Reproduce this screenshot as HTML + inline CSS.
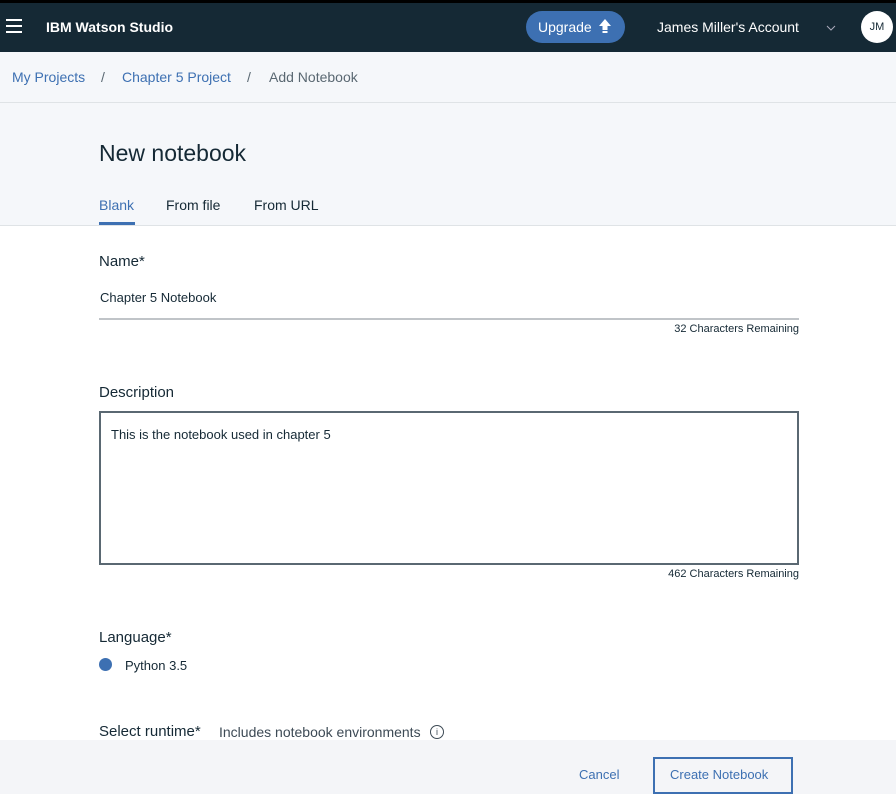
<!DOCTYPE html>
<html><head><style>
*{margin:0;padding:0;box-sizing:border-box}
body{width:896px;height:794px;overflow:hidden;font-family:"Liberation Sans",sans-serif;background:#fff;position:relative;color:#152935}
.a{position:absolute}
.top{left:0;top:0;width:896px;height:3px;background:#000}
.hdr{left:0;top:3px;width:896px;height:49px;background:#152935;color:#fff}
.bc{left:0;top:52px;width:896px;height:174px;background:#f5f7fa;border-bottom:1px solid #dfe3e6}
.bcl{top:102px;left:0;width:896px;height:1px;background:#dfe3e6}
.t{white-space:nowrap}
</style></head><body>
<div class="a top"></div>
<div class="a hdr">
 <div class="a" style="left:6px;top:16px;width:16px;height:2px;background:#fff"></div>
 <div class="a" style="left:6px;top:22px;width:16px;height:2px;background:#fff"></div>
 <div class="a" style="left:6px;top:28px;width:16px;height:2px;background:#fff"></div>
 <div class="a t" style="left:46px;top:16px;font-size:14px;font-weight:bold">IBM Watson Studio</div>
 <div class="a" style="left:526px;top:8px;width:99px;height:32px;border-radius:16px;background:#3d70b2"></div>
 <div class="a t" style="left:538px;top:16px;font-size:14px">Upgrade</div>
 <svg class="a" style="left:598px;top:15px" width="14" height="16" viewBox="0 0 14 16"><path d="M7 1 L13 8 H9.5 V12 H4.5 V8 H1 Z" fill="#fff"/><rect x="4.5" y="13" width="5" height="2" fill="#fff"/></svg>
 <div class="a t" style="left:657px;top:16px;font-size:14px">James Miller's Account</div>
 <svg class="a" style="left:826px;top:22px" width="10" height="6"><path d="M1 1 L5 5 L9 1" stroke="#aab" fill="none"/></svg>
 <div class="a" style="left:861px;top:8px;width:32px;height:32px;border-radius:50%;background:#fff;color:#152935;font-size:11px;text-align:center;line-height:32px">JM</div>
</div>
<div class="a bc"></div>
<div class="a bcl"></div>
<div class="a t" style="left:12px;top:69px;font-size:14px;color:#3d70b2">My Projects</div>
<div class="a t" style="left:101px;top:69px;font-size:14px;color:#5a6872">/</div>
<div class="a t" style="left:122px;top:69px;font-size:14px;color:#3d70b2">Chapter 5 Project</div>
<div class="a t" style="left:247px;top:69px;font-size:14px;color:#5a6872">/</div>
<div class="a t" style="left:269px;top:69px;font-size:14px;color:#5a6872">Add Notebook</div>
<div class="a t" style="left:99px;top:140px;font-size:23px;color:#152935">New notebook</div>
<div class="a t" style="left:99px;top:197px;font-size:14px;color:#3d70b2">Blank</div>
<div class="a" style="left:99px;top:222px;width:36px;height:3px;background:#3d70b2"></div>
<div class="a t" style="left:166px;top:197px;font-size:14px">From file</div>
<div class="a t" style="left:254px;top:197px;font-size:14px">From URL</div>
<div class="a t" style="left:99px;top:253px;font-size:15px">Name*</div>
<div class="a t" style="left:100px;top:290px;font-size:13px">Chapter 5 Notebook</div>
<div class="a" style="left:99px;top:318px;width:700px;height:2px;background:#c0c4c8"></div>
<div class="a t" style="right:97px;top:323px;font-size:11px">32 Characters Remaining</div>
<div class="a t" style="left:99px;top:384px;font-size:15px">Description</div>
<div class="a" style="left:99px;top:411px;width:700px;height:154px;border:2px solid #5a6872"></div>
<div class="a t" style="left:111px;top:427px;font-size:13px">This is the notebook used in chapter 5</div>
<div class="a t" style="right:97px;top:568px;font-size:11px">462 Characters Remaining</div>
<div class="a t" style="left:99px;top:629px;font-size:15px">Language*</div>
<div class="a" style="left:99px;top:658px;width:13px;height:13px;border-radius:50%;background:#3d70b2"></div>
<div class="a t" style="left:125px;top:658px;font-size:13px">Python 3.5</div>
<div class="a t" style="left:99px;top:723px;font-size:15px">Select runtime*</div>
<div class="a t" style="left:219px;top:724px;font-size:14px;color:#3d4a55">Includes notebook environments</div>
<div class="a" style="left:430px;top:725px;width:14px;height:14px;border:1px solid #3d4a55;border-radius:50%;font-size:9px;text-align:center;line-height:12px;color:#3d4a55">i</div>
<div class="a" style="left:0;top:740px;width:896px;height:54px;background:#f4f5f8"></div>
<div class="a t" style="left:579px;top:767px;font-size:13px;color:#3d70b2">Cancel</div>
<div class="a" style="left:653px;top:757px;width:140px;height:37px;border:2px solid #3d70b2"></div>
<div class="a t" style="left:670px;top:767px;font-size:13px;color:#3d70b2">Create Notebook</div>
</body></html>
